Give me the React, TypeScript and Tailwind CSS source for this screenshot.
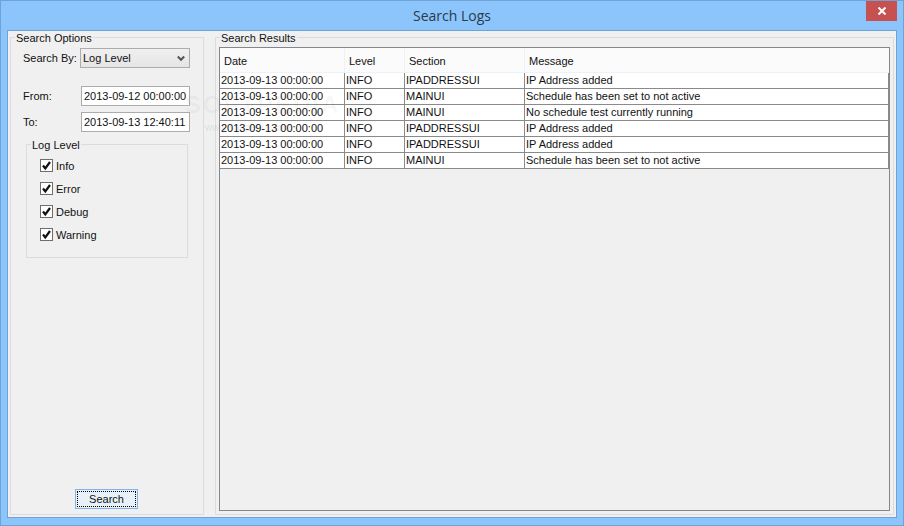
const font = "font-['Liberation_Sans',Arial,sans-serif]";

const rows = [
  ["2013-09-13 00:00:00", "INFO", "IPADDRESSUI", "IP Address added"],
  ["2013-09-13 00:00:00", "INFO", "MAINUI", "Schedule has been set to not active"],
  ["2013-09-13 00:00:00", "INFO", "MAINUI", "No schedule test currently running"],
  ["2013-09-13 00:00:00", "INFO", "IPADDRESSUI", "IP Address added"],
  ["2013-09-13 00:00:00", "INFO", "IPADDRESSUI", "IP Address added"],
  ["2013-09-13 00:00:00", "INFO", "MAINUI", "Schedule has been set to not active"],
];

const columns = ["Date", "Level", "Section", "Message"];
const widths = ["w-[125px]", "w-[60px]", "w-[120px]", "flex-1"];

function Check({ label }: { label: string }) {
  return (
    <label className="flex h-[13px] items-center gap-[3px]">
      <span className="flex h-[13px] w-[13px] items-center justify-center border border-[#6d6d6d] bg-white">
        <svg width="11" height="11" viewBox="0 0 11 11">
          <path d="M2 5.5 L4.3 8.5 L9 2" fill="none" stroke="#111" strokeWidth="2.2" />
        </svg>
      </span>
      {label}
    </label>
  );
}

export default function App() {
  return (
    <div className={`${font} relative flex h-[526px] w-[904px] flex-col border border-[#6fa3d6] bg-[#8cc5fb] text-[11px] leading-[14px] text-[#111]`}>
      <div className="relative flex h-[29px] shrink-0 items-center justify-center font-['Open_Sans',sans-serif] text-[14px] text-[#2a3a48]">
        Search Logs
        <div className="absolute right-[6px] top-0 flex h-[20px] w-[31px] items-center justify-center bg-[#c75050]">
          <svg width="8" height="8" viewBox="0 0 8 8">
            <path d="M0.5 0.5 L7.5 7.5 M7.5 0.5 L0.5 7.5" stroke="#fff" strokeWidth="2" />
          </svg>
        </div>
      </div>

      <div className="mx-[6px] mb-[7px] flex flex-1 gap-[11px] border border-[#6fa3d6] bg-[#f0f0f0] p-[2px] pt-[6px]">
        {/* left group */}
        <div className="relative flex w-[194px] flex-col border border-[#dcdcdc] pl-[12px]">
          <span className="absolute left-[4px] top-[-7px] bg-[#f0f0f0] px-[1px]">Search Options</span>
          <div className="mt-[10px] flex items-center">
            <span className="w-[57px] whitespace-nowrap">Search By:</span>
            <div className="flex h-[20px] w-[110px] items-center justify-between border border-[#acacac] bg-linear-to-b from-[#f0f0f0] to-[#e5e5e5] pl-[2px] pr-[4px]">
              Log Level
              <svg width="8" height="7" viewBox="0 0 8 7">
                <path d="M0.8 1.5 L4 4.8 L7.2 1.5" fill="none" stroke="#555" strokeWidth="2" />
              </svg>
            </div>
          </div>
          <div className="mt-[18px] flex items-center">
            <span className="w-[58px]">From:</span>
            <div className="flex h-[20px] w-[109px] items-center whitespace-nowrap border border-[#acacac] bg-white pl-[2px]">2013-09-12 00:00:00</div>
          </div>
          <div className="mt-[6px] flex items-center">
            <span className="w-[58px]">To:</span>
            <div className="flex h-[20px] w-[109px] items-center whitespace-nowrap border border-[#acacac] bg-white pl-[2px]">2013-09-13 12:40:11</div>
          </div>
          <div className="relative ml-[3px] mt-[12px] flex h-[114px] w-[162px] flex-col gap-[10px] border border-[#dcdcdc] pl-[13px] pt-[14px]">
            <span className="absolute left-[4px] top-[-7px] bg-[#f0f0f0] px-[1px]">Log Level</span>
            <Check label="Info" />
            <Check label="Error" />
            <Check label="Debug" />
            <Check label="Warning" />
          </div>
          <div className="mb-[5px] ml-[52px] mt-auto flex h-[20px] w-[63px] items-center justify-center border border-[#7eb4ea] bg-[#e8f0f8]">
            <span className="flex h-[16px] w-[59px] items-center justify-center border border-dotted border-black">Search</span>
          </div>
        </div>

        {/* right group */}
        <div className="relative flex flex-1 flex-col border border-[#dcdcdc] px-[3px] pb-[3px] pt-[9px]">
          <span className="absolute left-[4px] top-[-7px] bg-[#f0f0f0] px-[1px]">Search Results</span>
          <div className="flex flex-1 flex-col border border-[#828790] bg-[#f0f0f0]">
            <div className="flex h-[25px] border-b border-[#eef2f8] bg-[#fbfbfb]">
              {columns.map((c, i) => (
                <div key={c} className={`${widths[i]} flex items-center border-r border-[#eef2f8] pl-[4px] pt-[1px] last:border-r-0`}>
                  {c}
                </div>
              ))}
            </div>
            {rows.map((r, i) => (
              <div key={i} className="flex h-[16px] border-b border-[#8a8a8a] bg-white">
                {r.map((v, j) => (
                  <div key={j} className={`${widths[j]} flex items-center whitespace-nowrap border-r border-[#8a8a8a] pb-[1px] pl-[1px]`}>
                    {v}
                  </div>
                ))}
              </div>
            ))}
          </div>
        </div>
      </div>

      {/* faint watermark lying over the window */}
      <div className="pointer-events-none absolute left-[184px] top-[91px] text-[24px] font-bold leading-[26px] tracking-[2px] text-black/5">SOFTPEDIA</div>
      <div className="pointer-events-none absolute left-[204px] top-[121px] text-[10px] leading-[12px] text-black/10">www.softpedia.com</div>
    </div>
  );
}
